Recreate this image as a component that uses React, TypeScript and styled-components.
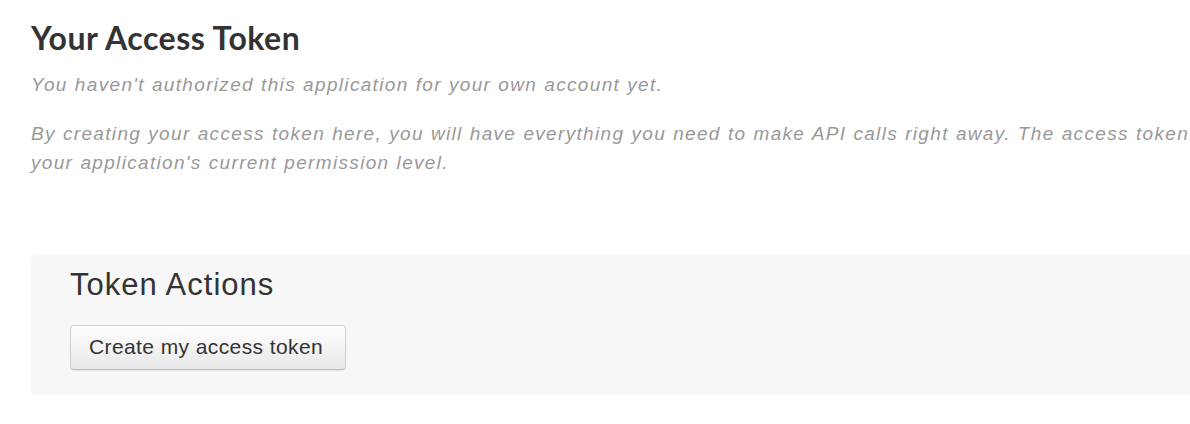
import React from "react";
import styled, { createGlobalStyle } from "styled-components";

const GlobalStyle = createGlobalStyle`
  html, body {
    margin: 0;
    padding: 0;
    background: #fff;
    overflow: hidden;
  }
  body {
    font-family: "Liberation Sans", Arial, sans-serif;
    color: #333;
  }
`;

const Page = styled.div`
  width: 1480px;
  padding: 18px 0 30px 31px;
  box-sizing: border-box;
`;

const Title = styled.h2`
  margin: 0;
  font-family: Lato, "Open Sans", sans-serif;
  font-weight: 700;
  font-size: 32px;
  line-height: 40px;
  letter-spacing: 0.5px;
  color: #333;
`;

const Note = styled.p`
  margin: 12px 0 0;
  font-family: "Liberation Sans", Arial, sans-serif;
  font-style: italic;
  font-size: 19px;
  line-height: 29px;
  letter-spacing: 1.33px;
  word-spacing: 0.5px;
  color: #999;
  & + & {
    margin-top: 20px;
  }
`;

const ActionsPanel = styled.section`
  margin-top: 78px;
  background: #f7f7f7;
  border-radius: 4px;
  padding: 12px 39px 25px;
`;

const PanelTitle = styled.h3`
  margin: 0 0 22px;
  font-family: "Liberation Sans", Arial, sans-serif;
  font-weight: 400;
  font-size: 31px;
  line-height: 36px;
  letter-spacing: 1px;
  color: #333;
`;

const Button = styled.button`
  display: inline-block;
  margin: 0;
  padding: 10px 22px 11px 18px;
  font-family: "Liberation Sans", Arial, sans-serif;
  font-size: 21px;
  line-height: 22px;
  letter-spacing: 0.4px;
  color: #333;
  background: linear-gradient(#ffffff, #e8e8e8);
  border: 1px solid #cfcfcf;
  border-bottom-color: #bdbdbd;
  border-radius: 4px;
  box-shadow: 0 1px 1px rgba(0, 0, 0, 0.08);
  cursor: pointer;
`;

export default function App() {
  return (
    <>
      <GlobalStyle />
      <Page>
        <Title>Your Access Token</Title>
        <Note>You haven't authorized this application for your own account yet.</Note>
        <Note>
          By creating your access token here, you will have everything you need to make API
          calls right away. The access token generated will be assigned your application's
          current permission level.
        </Note>
        <ActionsPanel>
          <PanelTitle>Token Actions</PanelTitle>
          <Button type="button">Create my access token</Button>
        </ActionsPanel>
      </Page>
    </>
  );
}
